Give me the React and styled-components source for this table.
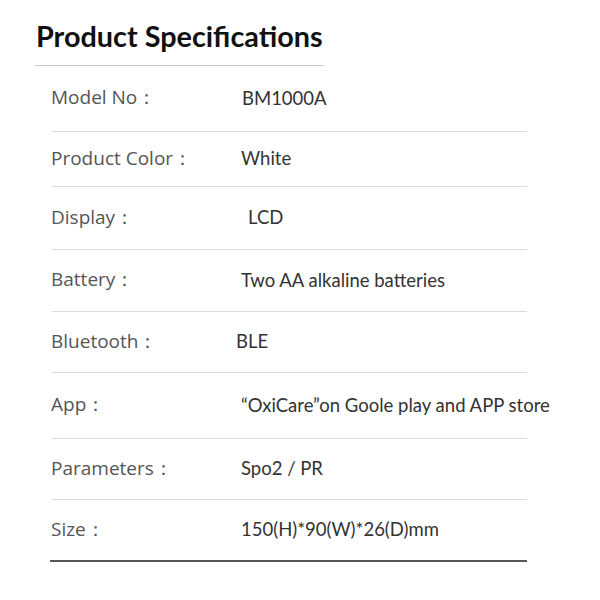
import React from 'react';
import styled, { createGlobalStyle } from 'styled-components';

const Global = createGlobalStyle`
  body {
    margin: 0;
    background: #fff;
  }
`;

// Page wrapper
const Page = styled.div`
  width: 600px;
  height: 600px;
  padding: 19px 0 0 35px;
  box-sizing: border-box;
  background: #fff;
`;

const Title = styled.h1`
  margin: 0;
  font-family: Lato, "Open Sans", sans-serif;
  font-weight: 700;
  font-size: 28.8px;
  line-height: 34px;
  color: #111;
  width: 288px;
  padding-left: 1px;
  padding-bottom: 12px;
  border-bottom: 1px solid #c8c8c8;
`;

const Table = styled.div`
  margin-left: 17px;
  width: 475px;
`;

const Row = styled.div`
  display: flex;
  align-items: center;
  height: ${(p) => p.h}px;
  box-sizing: border-box;
  padding-bottom: 2px;
  border-bottom: 1px solid #dcdcdc;

  &:last-child {
    margin-left: -2px;
    padding-left: 2px;
    border-bottom: 2px solid #555;
  }
`;

const Label = styled.div`
  flex: 0 0 190px;
  margin-left: -1px;
  font-family: "Open Sans", sans-serif;
  font-size: 19px;
  color: #555;
  white-space: nowrap;
`;

const Value = styled.div`
  flex: 0 0 auto;
  margin-left: ${(p) => p.shift || 0}px;
  font-family: Lato, "Open Sans", sans-serif;
  font-size: 18.5px;
  color: #333;
  white-space: nowrap;
`;

const specs = [
  { label: 'Model No：', value: 'BM1000A', h: 66, shift: 1 },
  { label: 'Product Color：', value: 'White', h: 55, shift: 0 },
  { label: 'Display：', value: 'LCD', h: 63, shift: 7 },
  { label: 'Battery：', value: 'Two AA alkaline batteries', h: 62, shift: 0 },
  { label: 'Bluetooth：', value: 'BLE', h: 61, shift: -5 },
  { label: 'App：', value: '“OxiCare”on Goole play and APP store', h: 66, shift: 0 },
  { label: 'Parameters：', value: 'Spo2 / PR', h: 61, shift: 0 },
  { label: 'Size：', value: '150(H)*90(W)*26(D)mm', h: 62, shift: 0 },
];

export default function App() {
  return (
    <Page>
      <Global />
      <Title>Product Specifications</Title>
      <Table>
        {specs.map((s) => (
          <Row key={s.label} h={s.h}>
            <Label>{s.label}</Label>
            <Value shift={s.shift}>{s.value}</Value>
          </Row>
        ))}
      </Table>
    </Page>
  );
}
